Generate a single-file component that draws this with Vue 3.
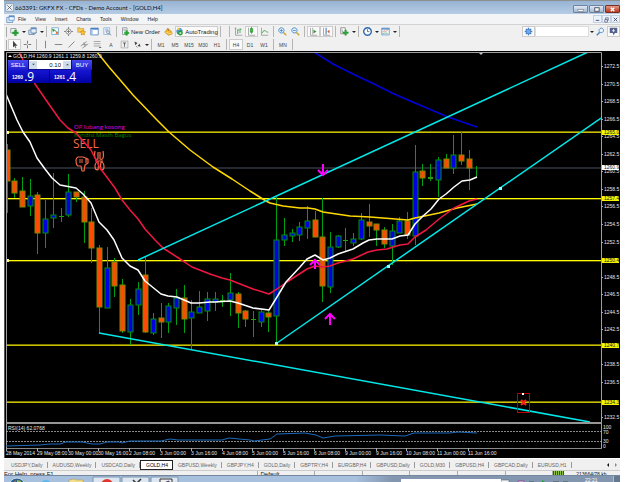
<script setup>
import { ref } from 'vue'

const lots = ref('0.10')
const query = ref('')

const G = '#2d9a36'
const icons = {
  plus: [['M1 2h7v6H1z', '#eef6ee', '#7d8f9b'], ['M6 4h2.500v2.500H11V9H8.500v2.500H6V9H3.500V6.500H6z', '#22a52c', '#0f7d1c', .5]],
  profiles: [['M1 4h7v6H1z', '#cfe0f1', '#6484a8'], ['M4 1h7v7H4z', '#e4eefa', '#6484a8'], ['M4 1h7v2H4z', '#5f8fc4'], ['M6 8l2 2 3-3', 'none', '#5577a0']],
  watch: [['M1 1h9v9H1z', '#f6fbff', '#6fa3c9'], ['M2 3l3 1-2 2zM5 4l3 4', '#2d9a36', '#2d9a36'], ['M8 5l2 4H6z', '#e2662c']],
  target: [['M6 0v12M0 6h12', 'none', '#666'], ['M6 2.500A3.500 3.500 0 1 0 6 9.500A3.500 3.500 0 1 0 6 2.500z', '#f4f4f4', '#777'], ['M6 4v4M4 6h4', 'none', '#666']],
  folder: [['M1 1h3l1 1h4v5H1z', '#f3cd58', '#b78a20', .7], ['M8 4l1 2 2.500.3-2 1.700.5 2.700L8 9.500 5.500 10.700 6 8 4.200 6.300 7 6z', '#ffc62a', '#c9780c', .7]],
  terminal: [['M1 1.500h10v9H1z', '#fff', '#3f79bd'], ['M1 1.500h10v2H1z', '#3f79bd'], ['M1 3h2.500v7H1z', '#9fc2e8']],
  tester: [['M1 1h8v9H1z', '#eaf3fb', '#8cb2d3'], ['M3 3h4M3 5h4', 'none', '#7fa7c9'], ['M6.500 5a2 2 0 1 0 .1 0zM8 8.500L11 11', '#cfe4f6', '#7a8592', 1]],
  order: [['M2 1h6v9H2z', '#fff', '#7f8a93'], ['M3 3h4M3 5h4', 'none', '#99a'], ['M6.500 5h2v2h2v2h-2v2h-2V9h-2V7h2z', '#23b02e', '#118020', .5]],
  editor: [['M1 7L5 2l5 4 1 3-5 2z', '#f2b92e', '#b87a10', .8], ['M2 7l5 2 4-1', 'none', '#fff0a8', .8], ['M5 2l1 3', 'none', '#8a5d10']],
  auto: [['M2 5q2-4 6-3l2 3-2 4H3z', '#4b9fd9', '#2f6f9f', .6], ['M3 1h3v3H3z', '#f0c74c'], ['M7 5a3 3 0 1 0 .1 0z', '#23a52e', '#157a1e', .5], ['M6.200 6.500v3L9 8z', '#fff']],
  bars: [['M2 1v10h9M1 2l1-1 1 1', 'none', '#777', .8], ['M5 3v6M5 8h-1M5 4h2M8 2v6M8 3h2', 'none', G]],
  candles: [['M2 1v10h9', 'none', '#777', .8], ['M6 0v9', 'none', G], ['M4.500 2h3v5h-3z', '#2dbb3b', G]],
  line: [['M2 1v10h9', 'none', '#777', .8], ['M3 8q2-5 4-3t4 2', 'none', G]],
  zoomin: [['M7 7l4 4', 'none', '#d2a530', 2], ['M4.500 1a3.500 3.500 0 1 0 .1 0z', '#e6f3fd', '#3f86c6', 1.200], ['M4.500 3v3.500M2.800 4.700h3.500', 'none', '#2c74b8']],
  zoomout: [['M7 7l4 4', 'none', '#d2a530', 2], ['M4.500 1a3.500 3.500 0 1 0 .1 0z', '#e6f3fd', '#3f86c6', 1.200], ['M2.800 4.700h3.500', 'none', '#2c74b8']],
  scroll: [['M2 1v10h9M5 1v9', 'none', '#777', .8], ['M6 3.500v5l4-2.500z', G]],
  shift: [['M2 1v10h9M5 1v9', 'none', '#777', .8], ['M10 3.500v5L7 6z', '#d4572b'], ['M6 1v9', 'none', '#4b7fb0', .8]],
  indicator: [['M1 1h6v8H1z', '#fff', '#777'], ['M3 3v4h2', 'none', '#888'], ['M6.500 4h2v2.500H11v2H8.500V11h-2V8.500H4v-2h2.500z', '#23b02e', '#118020', .5]],
  clock: [['M6 1a5 5 0 1 0 .1 0z', '#fff', '#2767b3', 1.800], ['M6 3v3.200h2.500', 'none', '#333', .9]],
  template: [['M1 1.500h10v9H1z', '#f8fbff', '#5a90c8'], ['M1 1.500h10v2H1z', '#5a90c8'], ['M2 7l2-2 2 1 3-2', 'none', '#d4572b', .8], ['M2 9l3-1 4 .5', 'none', G, .8]],
  cursor: [['M4 1v9l2-2 1.500 3 1-.5L7 7.500h3z', '#444']],
  cross: [['M6 1v4M6 7v4M1 6h4M7 6h4', 'none', '#555']],
  vline: [['M6 1v10', 'none', '#666']],
  hline: [['M1 6h10', 'none', '#666']],
  trend: [['M2 10L10 2', 'none', '#666']],
  channel: [['M1 8l8-6M3 11l8-6', 'none', '#666', .8], ['M5 3l2 6M3 6h6', 'none', '#777', .8]],
  fibo: [['M1 2h9M1 5h9M1 8h9', 'none', '#777', .8], ['M8 10h3', 'none', '#444']],
  letter: [['M1.500 1.500h9v9h-9z', 'none', '#888', .7], ['M4 4h4M6 4v5', 'none', '#444']],
  arrows: [['M2 2l4 2-3 3z', '#444'], ['M10 9L6 8l3-3z', '#444'], ['M4 8l2 2', 'none', '#777']],
  gear: [['M6 1v10M1 6h10M2.500 2.500l7 7M9.500 2.500l-7 7', 'none', '#3d7cc9', 1.800], ['M6 3a3 3 0 1 0 .1 0z', '#72a9e4', '#3d7cc9']],
  search: [['M5 7l-4 4', 'none', '#4a7fb8', 1.800], ['M7 1.500a3 3 0 1 0 .1 0z', '#eaf4ff', '#4a86cc', 1.200]],
  chat: [['M1 1h10v7H8l-2 3-1-3H1z', '#53618c'], ['M6 2.500v4M4 5h4', 'none', '#fff']]
}

const b = (icon, label, extra = {}) => ({ kind: 'btn', icon, label, ...extra })
const dd = (label) => ({ kind: 'drop', label })
const sep = { kind: 'sep' }
const mainTools = [
  b('plus', 'New chart'), dd('Chart list'), b('profiles', 'Profiles'), dd('Profile list'), sep,
  b('watch', 'Market Watch'), b('target', 'Data Window'), b('folder', 'Navigator'), b('terminal', 'Terminal'), b('tester', 'Strategy Tester'), sep,
  b('order', 'New Order', { text: 'New Order' }), b('editor', 'MetaEditor'), b('auto', 'AutoTrading', { text: 'AutoTrading', on: true }), sep, { kind: 'sep', far: true },
  b('bars', 'Bar chart'), b('candles', 'Candlesticks', { on: true }), b('line', 'Line chart'), sep,
  b('zoomin', 'Zoom in'), b('zoomout', 'Zoom out'), sep,
  b('scroll', 'Auto scroll', { on: true }), b('shift', 'Chart shift', { on: true }), sep,
  b('indicator', 'Indicators'), dd('Indicator list'), sep,
  b('clock', 'Periods'), dd('Period list'), b('template', 'Templates'), dd('Template list'), sep
]
const p = (text, on) => ({ kind: 'period', text, on })
const drawTools = [
  b('cursor', 'Cursor', { on: true }), b('cross', 'Crosshair'), sep,
  b('vline', 'Vertical line'), b('hline', 'Horizontal line'), b('trend', 'Trendline'), b('channel', 'Channel'), b('fibo', 'Fibonacci'),
  p('A'), b('letter', 'Text label'), b('arrows', 'Arrows'), dd('Arrow list'), sep,
  p('M1'), p('M5'), p('M15'), p('M30'), p('H1'), sep, p('H4', true), p('D1'), p('W1'), sep, p('MN'), sep
]

const menus = ['File', 'View', 'Insert', 'Charts', 'Tools', 'Window', 'Help']
const tabs = ['USDJPY,Daily', 'AUDUSD,Weekly', 'USDCAD,Daily', 'GOLD,H4', 'GBPUSD,Weekly', 'GBPJPY,H4', 'GOLD,Daily', 'GBPTRY,H4', 'EURGBP,H4', 'GBPUSD,Daily', 'GOLD,M30', 'GBPUSD,H4', 'GBPCAD,Daily', 'EURUSD,H1']

// high, body top, body bottom, low, direction
const bars = [
  [144,150,181,213,'d'],[178,181,193,198,'d'],[177,191,207,207,'d'],[179,196,206,216,'u'],[192,195,233,254,'d'],
  [200,219,233,248,'u'],[173,215,218,228,'u'],[208,216,217,222,'u'],[174,192,215,217,'u'],[192,192,197,202,'d'],
  [191,197,222,243,'d'],[208,222,248,263,'d'],[245,248,307,333,'d'],[247,268,308,308,'u'],[258,262,286,297,'d'],
  [279,285,331,333,'d'],[299,305,332,345,'u'],[282,289,305,315,'u'],[257,275,332,333,'d'],[313,319,333,335,'u'],
  [303,318,322,338,'d'],[303,306,322,333,'u'],[289,298,308,325,'u'],[285,298,319,333,'d'],[300,312,318,350,'u'],
  [291,307,313,313,'u'],[292,299,311,321,'u'],[292,299,302,311,'u'],[295,300,302,307,'d'],[273,293,300,316,'u'],
  [292,294,313,328,'d'],[310,311,319,327,'d'],[311,319,320,337,'u'],[310,312,322,327,'u'],[311,313,317,332,'d'],
  [197,240,316,343,'u'],[218,235,240,246,'u'],[229,233,236,242,'u'],[222,227,235,241,'u'],[206,221,228,239,'u'],
  [211,220,237,237,'d'],[198,237,286,302,'d'],[232,247,287,293,'u'],[235,236,247,248,'u'],[228,240,241,251,'d'],
  [233,239,243,246,'u'],[213,220,239,240,'u'],[204,222,226,237,'d'],[224,224,230,246,'d'],[227,230,244,248,'d'],
  [224,231,246,265,'u'],[217,221,233,233,'u'],[212,221,235,239,'d'],[145,172,236,245,'u'],[164,171,178,186,'d'],
  [164,177,179,181,'u'],[157,160,180,197,'u'],[154,159,168,168,'d'],[135,155,168,174,'u'],[131,155,161,165,'d'],
  [150,159,168,190,'d'],[166,178,178,178,'u']
]
const candles = bars.map(([high, top, bottom, low, dir], i) => ({ x: Math.round(6.6 + 7.7 * i), high, top, h: bottom - top, low, dir }))

const white = '6,94 17,120 23,132 30,142 37,158 45,169 52,178 60,185 76,188 83,194 91,203 99,222 107,230 114,240 122,258 130,266 138,270 145,281 161,294 168,296 177,297 184,300 191,303 199,303 210,302 215,302 230,301 238,303 253,308 269,310 277,297 286,282 300,267 307,259 315,255 323,260 330,258 338,254 353,249 363,243 369,240 377,239 392,239 400,236 408,235 415,224 423,216 431,209 439,199 446,194 454,187 462,181 470,180 477,177'
const red = '19,52 22,58 35,84 46,100 60,120 68,128 76,133 91,150 100,168 115,188 122,200 130,210 138,219 145,229 155,240 163,248 177,257 192,267 210,274 222,278 230,280 253,289 269,294 277,289 287,282 307,269 315,266 323,267 330,266 338,263 353,259 368,252 377,250 387,249 400,245 408,244 415,237 426,230 439,219 454,208 469,201 477,199'
const gold = '97,52 109,67 133,95 157,120 169,132 190,150 213,167 232,179 250,191 266,201 270,203 283,206 300,208 308,208 315,209 323,212 350,216 370,217 383,218 408,220 415,218 439,213 457,208 477,204'
const blue = '314,52 333,64 355,75 372,83 392,93 415,103 448,117 477,127'
const rsi = '6,446 40,445 50,444 60,444 66,442 82,442 92,444 100,444 107,442 119,442 122,443 130,441 140,441 161,441 170,439 178,440 186,440 206,440 222,440 229,438 250,440 254,441 270,439 277,434 305,433 316,435 323,438 335,436 380,435 405,436 414,433 450,433 458,432 477,433'

const levels = [
  { y: 132, label: '1265.0', dim: true }, { y: 198, label: '1257.4' }, { y: 260, label: '1250.4' },
  { y: 345, label: '1240.7', dim: true }, { y: 402, label: '1234.3', dim: true }
]
// Ticks fully covered by a level tag are left out
const prices = Array.from({ length: 21 }, (_, i) => ({ label: (1272.5 - 2 * i).toFixed(1), y: Math.round(66 + 17.55 * i) }))
  .filter((t) => levels.every((l) => Math.abs(l.y - t.y) > 3))
const dates = ['28 May 2014', '29 May 08:00', '30 May 00:00', '30 May 16:00', '2 Jun 08:00', '3 Jun 00:00', '3 Jun 16:00', '4 Jun 08:00', '5 Jun 00:00', '5 Jun 16:00', '6 Jun 08:00', '9 Jun 00:00', '9 Jun 16:00', '10 Jun 08:00', '11 Jun 00:00', '11 Jun 16:00']
  .map((label, i) => ({ label, x: Math.round(6 + 30.8 * i) }))
</script>

<template>
  <div class="desk">
    <header class="title">
      <svg class="ico" viewBox="0 0 12 12"><rect x="1" y="1" width="10" height="10" fill="#eef3f7" stroke="#8899a8" /><path d="M3 3l6 6M9 3L3 9" stroke="#456" /></svg>
      <h1>663391: GKFX FX - CFDs - Demo Account - [GOLD,H4]</h1>
      <div class="winbtns">
        <button aria-label="Minimize"><svg viewBox="0 0 12 8"><rect x="3" y="4" width="6" height="2" fill="#fff" stroke="#667" stroke-width=".6" /></svg></button>
        <button aria-label="Restore"><svg viewBox="0 0 12 8"><rect x="4" y="2" width="5" height="4" fill="#fff" stroke="#445" /></svg></button>
        <button class="close" aria-label="Close"><svg viewBox="0 0 12 8"><path d="M4 2l4 4M8 2L4 6" stroke="#fff" stroke-width="1.500" /></svg></button>
      </div>
    </header>

    <nav class="menu">
      <svg class="ico" viewBox="0 0 12 12"><path d="M1 3h8v7H1z" fill="#d8e8f8" stroke="#5c8fc7" /><path d="M4 1h7v6H4z" fill="#f5faff" stroke="#5c8fc7" /><path d="M4 1h7v2H4z" fill="#5c8fc7" /></svg>
      <button v-for="m in menus" :key="m">{{ m }}</button>
      <div class="mdi">
        <button aria-label="Minimize chart"><svg viewBox="0 0 8 8"><path d="M2 5h4" stroke="#446" /></svg></button>
        <button aria-label="Restore chart"><svg viewBox="0 0 8 8"><path d="M2 4h3v3H2zM3 4V2h3v3H5" fill="none" stroke="#446" stroke-width=".7" /></svg></button>
        <button aria-label="Close chart"><svg viewBox="0 0 8 8"><path d="M2 2l4 4M6 2L2 6" stroke="#446" /></svg></button>
      </div>
    </nav>

    <div v-for="(row, r) in [mainTools, drawTools]" :key="r" class="tools">
      <span class="grip"></span>
      <template v-for="(t, i) in row" :key="i">
        <span v-if="t.kind === 'sep'" class="sep" :class="{ far: t.far }"></span>
        <button v-else-if="t.kind === 'drop'" class="drop" :aria-label="t.label"><svg viewBox="0 0 4 4"><path d="M0 1h4L2 3z" fill="#222" /></svg></button>
        <button v-else-if="t.kind === 'period'" class="tool period" :class="{ on: t.on }">{{ t.text }}</button>
        <button v-else class="tool" :class="{ on: t.on, wide: t.text }" :aria-label="t.label">
          <svg class="ico" viewBox="0 0 12 12">
            <path v-for="(s, k) in icons[t.icon]" :key="k" :d="s[0]" :fill="s[1]" :stroke="s[2] || 'none'" :stroke-width="s[3] || 1" />
          </svg>
          <span v-if="t.text">{{ t.text }}</span>
        </button>
      </template>
      <form v-if="r === 0" class="find" @submit.prevent>
        <button class="tool on" type="button" aria-label="Options"><svg class="ico" viewBox="0 0 12 12"><path v-for="(s, k) in icons.gear" :key="k" :d="s[0]" :fill="s[1]" :stroke="s[2]" :stroke-width="s[3] || 1" /></svg></button>
        <input v-model="query" aria-label="Search" />
        <button class="drop" type="button" aria-label="Search history"><svg viewBox="0 0 4 4"><path d="M0 1h4L2 3z" fill="#222" /></svg></button>
        <button class="tool" aria-label="Find"><svg class="ico" viewBox="0 0 12 12"><path v-for="(s, k) in icons.search" :key="k" :d="s[0]" :fill="s[1]" :stroke="s[2]" :stroke-width="s[3] || 1" /></svg></button>
        <button class="tool on" type="button" aria-label="Messages"><svg class="ico" viewBox="0 0 12 12"><path v-for="(s, k) in icons.chat" :key="k" :d="s[0]" :fill="s[1]" :stroke="s[2] || 'none'" /></svg></button>
      </form>
    </div>

    <main class="chart">
      <svg class="plot" viewBox="4 51 616 407" role="img" aria-label="GOLD H4 chart">
        <defs><clipPath id="area"><rect x="6" y="52" width="595" height="371" /></clipPath></defs>
        <rect x="4" y="51" width="616" height="407" fill="#000" />
        <rect x="4" y="51" width="1" height="407" fill="#555" />
        <g clip-path="url(#area)">
          <rect x="6" y="167" width="595" height="2" fill="#26292f" />
          <g v-for="l in levels" :key="l.y">
            <rect x="6" :y="l.y" width="595" height="1" :fill="l.dim ? '#c8c000' : '#ffff00'" />
            <rect x="6" :y="l.dim ? l.y - 1 : l.y + 1" width="595" height="1" :fill="l.dim ? '#7d7900' : '#555000'" />
          </g>
          <text class="note" x="74" y="129" fill="#e000e0">OP lubang kosong</text>
          <text class="note" x="74" y="137" fill="#008200">Kondisi Masih Bagus</text>
          <text class="signal" x="73" y="148">SELL</text>
          <g fill="none" stroke="#f86a48" stroke-width="1.200" stroke-linejoin="round">
            <path d="M76 160q0-2 2-3h5l5 2v4l-3 2-1 6h-2l-1-5h-3q-2-1-2-6zM79 160h4M79 162h4M86 158v5" />
            <path d="M95 151q-1 4 0 7 1 2 3 1v-7M103 151q1 4 0 7-1 2-3 1v-7M98 170q-3 0-3-3 0-5 3-5 1 4 0 8M101 170q3 0 3-3 0-5-3-5-1 4 0 8M95 161h8" />
          </g>
          <g v-for="c in candles" :key="c.x">
            <rect :x="c.x" :y="c.high" width="1" :height="c.low - c.high" fill="#00a010" />
            <rect v-if="c.h > 2" :x="c.x - 2" :y="c.top" width="5" :height="c.h" :fill="c.dir === 'u' ? '#0000e0' : '#ff4a05'" :stroke="c.dir === 'u' ? '#00920c' : '#7a8a00'" stroke-width="1" />
            <rect v-else-if="c.h" :x="c.x - 2" :y="c.top" width="5" :height="c.h" fill="#22a010" />
          </g>
          <g fill="none" stroke-width="1.500" stroke-linejoin="round">
            <polyline :points="blue" stroke="#0000d8" />
            <polyline :points="gold" stroke="#ffd800" />
            <polyline :points="red" stroke="#f01840" />
            <polyline :points="white" stroke="#fff" />
            <path d="M138 260L588 52M277 343L601 118M99 333L590 422" stroke="#00e8e8" />
          </g>
          <path d="M275 342h3v3h-3zM387 265h3v3h-3zM499 187h3v3h-3z" fill="#9ff" />
          <path d="M6 131h3v3h-3zM6 259h3v3h-3z" fill="#ff8" />
          <path d="M478 52h6l-3 3z" fill="#b9c6d2" />
          <g fill="none" stroke="#ff00ff" stroke-width="2">
            <path d="M323 164v10M318 170l5 5 5-5M315 269v-10M310 265l5-5 5 5M330 325v-11M325 319l5-5 5 5" />
          </g>
          <rect x="517.500" y="393.500" width="12" height="19" fill="none" stroke="#c00000" />
          <path d="M521 400l5 5M526 400l-5 5" stroke="#f21" stroke-width="2" />
          <rect x="522" y="393" width="2" height="2" fill="#fff" />
        </g>
        <path d="M6.500 448V52.500H601.500V448" fill="none" stroke="#a0a0a0" />
        <rect x="6" y="422" width="596" height="2" fill="#969696" />
        <rect x="6" y="448" width="596" height="1" fill="#888" />
        <path d="M6 431.500H601M6 441.500H601" stroke="#aaa" stroke-width="1" stroke-dasharray="2 1" opacity=".8" />
        <polyline :points="rsi" fill="none" stroke="#1d6bbd" stroke-width="1" />

        <g class="axis">
          <g v-for="t in prices" :key="t.label"><rect x="601" :y="t.y" width="2" height="1" fill="#aaa" /><text x="604" :y="t.y + 2">{{ t.label }}</text></g>
          <text x="603" y="429">100</text><text x="603" y="434">70</text><text x="603" y="443">30</text><text x="603" y="448">0</text>
          <g v-for="d in dates" :key="d.x"><rect :x="d.x" y="448" width="1" height="3" fill="#aaa" /><text :x="d.x" y="455">{{ d.label }}</text></g>
          <text x="8" y="430">RSI(14) 62.0768</text>
          <text x="13" y="58">GOLD,H4 1260.9 1261.1 1259.8 1260.9</text>
          <path d="M8 57h4l-2-2z" fill="#fff" />
        </g>
        <g v-for="l in levels" :key="l.label" class="tag">
          <rect x="602" :y="l.y - 2" width="17" height="5" fill="#f4f400" /><text x="604" :y="l.y + 2">{{ l.label }}</text>
        </g>
        <g class="tag"><rect x="602" y="165" width="17" height="5" fill="#fff" /><text x="604" y="169">1260.9</text></g>
      </svg>

      <section class="ticket" aria-label="One click trading">
        <button class="side">SELL</button>
        <div class="lots">
          <button aria-label="Less"><svg viewBox="0 0 4 4"><path d="M0 1h4L2 3z" fill="#456" /></svg></button>
          <input v-model="lots" aria-label="Volume" />
          <button aria-label="More"><svg viewBox="0 0 4 4"><path d="M0 3h4L2 1z" fill="#456" /></svg></button>
        </div>
        <button class="side">BUY</button>
        <button class="quote">1260 <b>.9</b></button>
        <button class="quote">1261 <b>.4</b></button>
      </section>
    </main>

    <nav class="tabs">
      <button v-for="t in tabs" :key="t" :class="{ current: t === 'GOLD,H4' }">{{ t }}</button>
      <span class="scrollers"><button aria-label="Scroll left"><svg viewBox="0 0 4 4"><path d="M3 0v4L1 2z" fill="#111" /></svg></button><button aria-label="Scroll right"><svg viewBox="0 0 4 4"><path d="M1 0v4l2-2z" fill="#888" /></svg></button></span>
    </nav>

    <footer class="status">
      <span class="help">For Help, press F1</span><span class="profile">Default</span><span></span><span></span><span></span><span></span><span></span>
      <span class="net"><i></i>213664/78 kb</span>
    </footer>

    <div class="taskbar">
      <svg class="apps" viewBox="0 0 200 7">
        <circle cx="13" cy="10" r="8" fill="#315f8c" stroke="#cde" /><path d="M9 7l3-3v5z" fill="#e2552b" /><path d="M13 4l4 1v4h-4z" fill="#8fc13e" />
        <circle cx="42" cy="10" r="6" fill="#5cb6ea" /><path d="M41 6h6v3h-6z" fill="#f09b2e" />
        <path d="M65 4l5-1 2 1h7v5H65z" fill="#f4df8d" stroke="#b99b45" stroke-width=".6" />
        <path d="M89 1h27v8H89zM118 1h27v8h-27zM147 1h27v8h-27z" fill="#dce7f2" stroke="#7f95ad" />
        <circle cx="103" cy="9" r="6" fill="#e3352e" /><circle cx="103" cy="10" r="3" fill="#fff" />
        <path d="M129 4l4 4M137 3l-6 6" stroke="#333" stroke-width="1.500" />
        <path d="M156 3h12v6h-12z" fill="#eee" stroke="#333" /><path d="M160 7l5-2v4" fill="none" stroke="#335" />
      </svg>
      <span class="band"></span>
      <svg class="tray" viewBox="0 0 84 7"><path d="M0 4h8v5H0z" fill="#f3f8fc" stroke="#567" stroke-width=".6" /><path d="M17 5h6v4h-6z" fill="#eee" stroke="#864a9a" /><path d="M28 6h5M52 6h6M62 6h5" stroke="#455" /><path d="M41 4l4 3-4 2z" fill="#1c9a36" /></svg>
      <time>22:21</time>
      <span class="peek"></span>
    </div>
  </div>
</template>

<style>
body { margin: 0; background: #fff; }
</style>

<style scoped>
.desk { margin: 0 5px 0 4px; font: 5px/6px "Liberation Sans", Arial, sans-serif; color: #222; background: #f0f0f0; overflow: hidden; }
button { margin: 0; padding: 0; border: 0; background: none; font: inherit; color: inherit; display: flex; align-items: center; justify-content: center; }
input { margin: 0; padding: 0; border: 0; min-width: 0; font: inherit; }
svg { display: block; }
.ico { width: 9px; height: 9px; flex: none; }

.title { display: flex; align-items: center; gap: 1px; height: 13px; padding-left: 1px; border-top: 1px solid #8f8f8f; background: linear-gradient(#97b3d3, #b5cce4); }
.title h1 { margin: 0; flex: 1; font: 6px/8px Lato, sans-serif; color: #111; }
.winbtns { display: flex; gap: 1px; align-self: flex-start; padding: 4px 0 0; }
.winbtns button { width: 15px; height: 8px; background: linear-gradient(#dfe9f4, #a3b8d0); border: 1px solid #6f83a0; box-sizing: border-box; border-radius: 1px; }
.winbtns svg { width: 11px; height: 7px; }
.winbtns .close { background: linear-gradient(#e19a88, #b9361c); border-color: #7c2e20; }

.menu { display: flex; align-items: center; gap: 9px; height: 10px; padding-left: 2px; border-bottom: 1px solid #d2d2d2; background: #f3f4f6; }
.menu > .ico { margin-right: -6px; }
.mdi { display: flex; margin-left: auto; }
.mdi button { width: 9px; height: 8px; box-sizing: border-box; border: 1px solid #c3d2e3; background: #eaf2fb; }
.mdi svg { width: 7px; height: 7px; }

.tools { display: flex; align-items: center; height: 13px; padding-left: 2px; }
.grip { width: 1px; height: 10px; border-left: 1px solid #aaa; flex: none; }
.sep { width: 1px; height: 11px; margin: 0 2px; background: #b5b5b5; flex: none; }
.sep.far { margin-left: 6px; }
.tool { width: 13px; height: 11px; flex: none; box-sizing: border-box; border: 1px solid transparent; }
.tool.on { background: #fafafa; border-color: #ccc; }
.tool.wide { width: 43px; gap: 1px; font-size: 6px; }
.period { width: 14px; color: #444; }
.drop { width: 5px; height: 11px; flex: none; }
.drop svg { width: 4px; height: 4px; }
.find { display: flex; align-items: center; margin-left: auto; }
.find input { width: 54px; height: 11px; background: #fff; border: 1px solid #ddd; box-sizing: border-box; }

.chart { position: relative; }
.plot { width: 100%; height: auto; }
.plot text { white-space: pre; }
.axis, .tag { font: 5px "Liberation Sans Narrow", "Liberation Sans", Arial, sans-serif; fill: #e6e6e6; }
.tag { fill: #222; }
.note { font: 6px "Open Sans", Verdana, sans-serif; }
.signal { font: 12px "Open Sans", Verdana, sans-serif; fill: #f86a48; }

.ticket { position: absolute; left: 4px; top: 9px; display: grid; grid-template-columns: 20px 22px 22px 20px; gap: 0; color: #fff; background: #0b0b8c; }
.side { height: 10px; background: linear-gradient(#4a4af2, #1d1dcc); font-size: 6px; }
.lots { grid-column: span 2; display: flex; align-items: center; background: #fff; margin: 0 1px 1px; }
.lots button { width: 8px; height: 8px; background: #cfdcea; flex: none; }
.lots svg { width: 3px; height: 3px; }
.lots input { flex: 1; height: 8px; font-size: 6px; text-align: right; padding-right: 2px; background: #fff; color: #111; }
.quote { grid-column: span 2; height: 13px; gap: 1px; justify-content: flex-start; padding-left: 4px; font-weight: 700; background: linear-gradient(#1616d2, #0000a4); border-right: 1px solid #000060; }
.quote b { font: 12px/12px "Open Sans", sans-serif; }

.tabs { display: flex; align-items: center; height: 11px; padding-left: 2px; border-top: 1px solid #fff; color: #666; }
.tabs > button { padding: 0 4px 0 5px; border-right: 1px solid #999; height: 6px; flex: none; }
.tabs > .current { height: 10px; background: #fff; color: #000; border: 1px solid #222; box-sizing: border-box; }
.scrollers { display: flex; gap: 4px; margin-left: auto; padding-right: 2px; }
.scrollers svg { width: 4px; height: 4px; }

.status { display: flex; align-items: flex-start; height: 4px; overflow: hidden; border-top: 1px solid #ccc; color: #111; }
.status span { flex: 49; height: 5px; border-right: 1px solid #aaa; white-space: nowrap; }
.status .help { flex: 266; font-size: 6px; }
.status .profile { flex: 56; padding-left: 2px; font-size: 6px; }
.status .net { flex: 70; border: 0; display: flex; gap: 12px; }
.net i { width: 11px; height: 5px; background: repeating-linear-gradient(90deg, #275c1c 0 1px, #8cc63f 1px 2px); }

.taskbar { display: flex; align-items: flex-start; height: 7px; overflow: hidden; border-top: 1px solid #74879e; background: linear-gradient(90deg, #a7c0dd 0 57%, #8396b0 63% 100%); }
.apps { width: 200px; height: 7px; flex: none; }
.band { width: 100px; height: 5px; margin: 3px 0 0 auto; background: #fff; }
.tray { width: 84px; height: 7px; flex: none; }
time { padding-top: 1px; color: #fff; width: 28px; }
.peek { width: 6px; height: 7px; background: #66788f; border-left: 1px solid #aebccd; }
</style>
